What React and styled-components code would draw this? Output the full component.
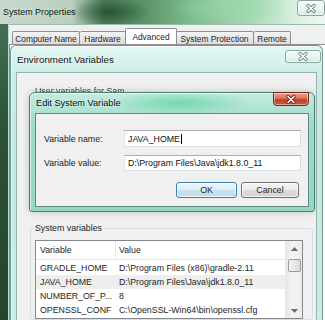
import React from "react";
import styled, { createGlobalStyle } from "styled-components";

const GlobalStyle = createGlobalStyle`
  html, body {
    margin: 0;
    padding: 0;
  }
  body {
    width: 325px;
    height: 320px;
    overflow: hidden;
    background: #2d5237;
  }
`;

const Screen = styled.div`
  width: 325px;
  height: 320px;
  overflow: hidden;
  display: flex;
  flex-direction: column;
  background: linear-gradient(180deg, #47775a 0%, #2c5238 40%, #24452e 100%);
  font-family: "Liberation Sans", Arial, sans-serif;
  font-size: 8.8px;
  color: #1e1e1e;
`;

/* ---------- generic window bits ---------- */

const XIcon = ({ stroke, fill, size = 10 }) => (
  <svg width={size} height={size - 1} viewBox="0 0 10 9">
    <path d="M2 1.5 L8 7.5 M8 1.5 L2 7.5" stroke={stroke} strokeWidth="3.2" strokeLinecap="round" />
    <path d="M2 1.5 L8 7.5 M8 1.5 L2 7.5" stroke={fill} strokeWidth="1.5" strokeLinecap="round" />
  </svg>
);

const CloseBtn = styled.div`
  flex: none;
  display: flex;
  align-items: center;
  justify-content: center;
  width: ${(p) => p.$w}px;
  height: ${(p) => p.$h}px;
  margin-top: ${(p) => p.$top || 0}px;
  margin-right: ${(p) => p.$right || 0}px;
  border: 1px solid ${(p) => (p.$red ? "#6e2a1d" : "#8aa6a0")};
  border-radius: ${(p) => (p.$red ? "0 0 4px 4px" : "3px")};
  box-sizing: border-box;
  background: ${(p) =>
    p.$red
      ? "linear-gradient(180deg, #e7a595 0%, #d6725c 45%, #c2402a 55%, #c9573f 100%)"
      : "linear-gradient(180deg, rgba(255,255,255,0.85) 0%, rgba(235,247,244,0.8) 50%, rgba(214,236,231,0.8) 100%)"};
  box-shadow: inset 0 0 0 1px rgba(255, 255, 255, 0.45);
`;

/* ---------- System Properties ---------- */

const SysTitleBar = styled.div`
  height: 24px;
  flex: none;
  display: flex;
  justify-content: space-between;
  align-items: flex-start;
  background:
    radial-gradient(ellipse 40px 14px at 110px 12px, rgba(30, 70, 40, 0.75), transparent),
    radial-gradient(ellipse 60px 16px at 230px 8px, rgba(150, 215, 170, 0.7), transparent),
    linear-gradient(90deg, #c9d8cc 0%, #b9cfbe 22%, #4d7f5a 32%, #5c9468 45%, #7fbf8f 60%, #a9dbb6 78%, #dff1e4 92%, #eef7f1 100%);
`;

const SysTitle = styled.span`
  padding: 7px 0 0 3px;
  font-size: 8.9px;
  color: #101810;
  text-shadow: 0 0 6px rgba(255, 255, 255, 0.8);
`;

const SysClient = styled.div`
  flex: 1;
  min-height: 0;
  display: flex;
  flex-direction: column;
  margin-left: 8px;
  background: #eef1ef;
  border-left: 1px solid #b8dcd2;
  border-top: 1px solid #9fb8ad;
`;

const TabRow = styled.div`
  height: 19px;
  flex: none;
  display: flex;
  align-items: flex-end;
  padding-left: 3px;
`;

const Tab = styled.div`
  box-sizing: border-box;
  width: ${(p) => p.$w}px;
  height: ${(p) => (p.$active ? 16 : 13)}px;
  margin: 0 ${(p) => (p.$active ? -1 : 0)}px;
  position: relative;
  z-index: ${(p) => (p.$active ? 1 : 0)};
  display: flex;
  align-items: center;
  justify-content: center;
  padding-top: ${(p) => (p.$active ? 0 : 1)}px;
  border: 1px solid #8c8e94;
  border-bottom: none;
  border-left-width: ${(p) => (p.$first || p.$active ? 1 : 0)}px;
  border-radius: 2px 2px 0 0;
  background: ${(p) =>
    p.$active ? "#ffffff" : "linear-gradient(180deg, #f4f4f4 0%, #e9e9e9 50%, #dcdcdc 100%)"};
  font-size: 8.4px;
  white-space: nowrap;
`;

const TabPanel = styled.div`
  flex: 1;
  min-height: 0;
  display: flex;
  border-top: 1px solid #8c8e94;
  border-left: 1px solid #8c8e94;
  background: #ffffff;
`;

/* ---------- Environment Variables ---------- */

const EnvWindow = styled.div`
  width: 313px;
  display: flex;
  flex-direction: column;
  box-sizing: border-box;
  border: 1px solid #6f9a94;
  border-bottom: none;
  border-radius: 6px 6px 0 0;
  padding: 0 5px;
  background: linear-gradient(180deg, #e4f6f2 0%, #c9ece5 12%, #c2e9e2 40%, #c8ece6 100%);
  box-shadow: inset 1px 1px 0 rgba(255, 255, 255, 0.7);
`;

const EnvTitleBar = styled.div`
  height: 26px;
  flex: none;
  display: flex;
  justify-content: space-between;
  align-items: flex-start;
`;

const EnvTitle = styled.span`
  padding: 8px 0 0 1px;
  font-size: 9.7px;
  color: #111;
  text-shadow: 0 0 5px rgba(255, 255, 255, 0.9);
`;

const EnvClient = styled.div`
  flex: 1;
  min-height: 0;
  overflow: hidden;
  display: flex;
  flex-direction: column;
  padding-left: 12px;
  background: #f0f0f0;
  border: 1px solid #98b3ae;
  border-bottom: none;
`;

/* the label sits behind the Edit dialog, only its top shows */
const HiddenLabel = styled.div`
  height: 8px;
  margin-top: 11px;
  overflow: hidden;
  padding: 2px 0 0 6px;
  box-sizing: border-box;
  line-height: 11px;
  color: #3a3a3a;
  filter: blur(0.4px);
`;

/* ---------- Edit System Variable ---------- */

const EditDialog = styled.div`
  width: 286px;
  height: 120px;
  flex: none;
  box-sizing: border-box;
  display: flex;
  flex-direction: column;
  border: 1px solid #4d7d74;
  border-radius: 6px 6px 3px 3px;
  padding: 0 5px 5px;
  background:
    radial-gradient(ellipse 70px 12px at 150px 10px, rgba(95, 210, 160, 0.75), transparent),
    linear-gradient(180deg, #c3ece0 0%, #9edcc9 25%, #95d7c2 100%);
  box-shadow: inset 1px 1px 0 rgba(255, 255, 255, 0.6), 0 0 6px rgba(0, 60, 40, 0.25);
`;

const EditTitleBar = styled.div`
  height: 20px;
  flex: none;
  display: flex;
  justify-content: space-between;
  align-items: flex-start;
`;

const EditTitle = styled.span`
  padding: 5px 0 0 1px;
  font-size: 9.2px;
  color: #111;
  text-shadow: 0 0 5px rgba(255, 255, 255, 0.9);
`;

const DialogClient = styled.div`
  flex: 1;
  display: flex;
  flex-direction: column;
  padding: 16px 7px 8px 8px;
  background: #f0f0f0;
  border: 1px solid #5d8b83;
`;

const FieldRow = styled.div`
  display: grid;
  grid-template-columns: 80px 1fr;
  align-items: center;
  margin-bottom: ${(p) => p.$gap || 0}px;
`;

const FieldLabel = styled.span`
  color: #1e1e1e;
`;

const Input = styled.div`
  box-sizing: border-box;
  height: ${(p) => p.$h}px;
  display: flex;
  align-items: center;
  padding-left: 3px;
  background: #ffffff;
  border: 1px solid #dbdfe6;
  border-top-color: #abadb3;
  border-left-color: #e2e3ea;
  color: #111;
  white-space: nowrap;
`;

const Caret = styled.span`
  display: inline-block;
  width: 1px;
  height: 10px;
  margin-left: 1px;
  background: #000;
`;

const ButtonRow = styled.div`
  display: flex;
  justify-content: flex-end;
  gap: 4px;
  padding-right: 2px;
`;

const Button = styled.div`
  box-sizing: border-box;
  width: ${(p) => p.$w}px;
  height: 16px;
  display: flex;
  align-items: center;
  justify-content: center;
  border: 1px solid ${(p) => (p.$default ? "#3c7fb1" : "#707070")};
  border-radius: 3px;
  background: ${(p) =>
    p.$default
      ? "linear-gradient(180deg, #eef6fb 0%, #dfeff8 48%, #cbe2ef 52%, #c2dbe9 100%)"
      : "linear-gradient(180deg, #f4f4f4 0%, #ececec 48%, #dddddd 52%, #d2d2d2 100%)"};
  box-shadow: inset 0 0 0 1px rgba(255, 255, 255, 0.7);
  color: #1e1e1e;
`;

/* ---------- System variables list ---------- */

const GroupBox = styled.div`
  width: 283px;
  flex: none;
  box-sizing: border-box;
  margin-top: 16px;
  margin-left: 1px;
  padding: 0 9px 0 4px;
  border: 1px solid #d5dfe5;
  border-radius: 3px;
`;

const GroupLabel = styled.div`
  width: fit-content;
  margin: -6px 0 0 -2px;
  padding: 0 2px;
  line-height: 11px;
  background: #f0f0f0;
  color: #1e1e1e;
`;

const ListBox = styled.div`
  height: 77px;
  margin-top: 6px;
  display: flex;
  border: 1px solid #828790;
  background: #ffffff;
`;

const Table = styled.div`
  flex: 1;
  display: flex;
  flex-direction: column;
`;

const TableRow = styled.div`
  display: grid;
  grid-template-columns: 80px 1fr;
  height: ${(p) => (p.$header ? 18 : 14)}px;
  align-items: center;
  background: ${(p) => (p.$selected ? "#eeeeee" : "transparent")};
  border-bottom: ${(p) => (p.$header ? "1px solid #e5e5e5" : "none")};
  margin-bottom: ${(p) => (p.$header ? 1 : 0)}px;
  white-space: nowrap;
  color: #1e1e1e;
`;

const Cell = styled.span`
  overflow: hidden;
  padding-left: ${(p) => (p.$first ? 4 : 3)}px;
  height: 100%;
  display: flex;
  align-items: center;
  border-right: ${(p) => (p.$divider ? "1px solid #e5e5e5" : "none")};
`;

const ScrollBar = styled.div`
  width: 16px;
  flex: none;
  display: flex;
  flex-direction: column;
  align-items: center;
  background: linear-gradient(90deg, #e6e6e6 0%, #f4f4f4 40%, #ececec 100%);
  border-left: 1px solid #e8e8e8;
`;

const Arrow = styled.div`
  height: 15px;
  flex: none;
  display: flex;
  align-items: center;
  justify-content: center;
`;

const Thumb = styled.div`
  width: 13px;
  height: 13px;
  flex: none;
  margin-top: 3px;
  box-sizing: border-box;
  border: 1px solid #9a9a9a;
  border-radius: 2px;
  background: linear-gradient(90deg, #f4f4f4 0%, #e8e8e8 50%, #d8d8d8 100%);
`;

const ScrollGap = styled.div`
  flex: 1;
`;

const Triangle = ({ down }) => (
  <svg width="7" height="4" viewBox="0 0 7 4">
    <path d={down ? "M0 0 H7 L3.5 4 Z" : "M0 4 H7 L3.5 0 Z"} fill="#6b6b6b" />
  </svg>
);

const tabs = [
  { label: "Computer Name", w: 68 },
  { label: "Hardware", w: 46 },
  { label: "Advanced", w: 52, active: true },
  { label: "System Protection", w: 78 },
  { label: "Remote", w: 37 },
];

const variables = [
  { name: "GRADLE_HOME", value: "D:\\Program Files (x86)\\gradle-2.11" },
  { name: "JAVA_HOME", value: "D:\\Program Files\\Java\\jdk1.8.0_11", selected: true },
  { name: "NUMBER_OF_P...", value: "8" },
  { name: "OPENSSL_CONF", value: "C:\\OpenSSL-Win64\\bin\\openssl.cfg" },
];

const App = () => {
  return (
    <>
      <GlobalStyle />
      <Screen>
        <SysTitleBar>
          <SysTitle>System Properties</SysTitle>
          <CloseBtn $w={28} $h={16}>
            <XIcon stroke="#6f7f7c" fill="#ffffff" />
          </CloseBtn>
        </SysTitleBar>

        <SysClient>
          <TabRow>
            {tabs.map((t, i) => (
              <Tab key={t.label} $w={t.w} $active={t.active} $first={i === 0}>
                {t.label}
              </Tab>
            ))}
          </TabRow>

          <TabPanel>
            <EnvWindow>
              <EnvTitleBar>
                <EnvTitle>Environment Variables</EnvTitle>
                <CloseBtn $w={36} $h={13} $top={4} $right={-4}>
                  <XIcon stroke="#74847f" fill="#ffffff" />
                </CloseBtn>
              </EnvTitleBar>

              <EnvClient>
                <HiddenLabel>User variables for Sam</HiddenLabel>

                <EditDialog>
                  <EditTitleBar>
                    <EditTitle>Edit System Variable</EditTitle>
                    <CloseBtn $red $w={36} $h={14} $top={-1}>
                      <XIcon stroke="#7a2415" fill="#ffffff" />
                    </CloseBtn>
                  </EditTitleBar>
                  <DialogClient>
                    <FieldRow $gap={8}>
                      <FieldLabel>Variable name:</FieldLabel>
                      <Input $h={17}>
                        JAVA_HOME
                        <Caret />
                      </Input>
                    </FieldRow>
                    <FieldRow $gap={11}>
                      <FieldLabel>Variable value:</FieldLabel>
                      <Input $h={16}>D:\Program Files\Java\jdk1.8.0_11</Input>
                    </FieldRow>
                    <ButtonRow>
                      <Button $w={61} $default>
                        OK
                      </Button>
                      <Button $w={58}>Cancel</Button>
                    </ButtonRow>
                  </DialogClient>
                </EditDialog>

                <GroupBox>
                  <GroupLabel>System variables</GroupLabel>
                  <ListBox>
                    <Table>
                      <TableRow $header>
                        <Cell $first $divider>
                          Variable
                        </Cell>
                        <Cell>Value</Cell>
                      </TableRow>
                      {variables.map((v) => (
                        <TableRow key={v.name} $selected={v.selected}>
                          <Cell $first>{v.name}</Cell>
                          <Cell>{v.value}</Cell>
                        </TableRow>
                      ))}
                    </Table>
                    <ScrollBar>
                      <Arrow>
                        <Triangle />
                      </Arrow>
                      <Thumb />
                      <ScrollGap />
                      <Arrow>
                        <Triangle down />
                      </Arrow>
                    </ScrollBar>
                  </ListBox>
                </GroupBox>
              </EnvClient>
            </EnvWindow>
          </TabPanel>
        </SysClient>
      </Screen>
    </>
  );
};

export default App;
